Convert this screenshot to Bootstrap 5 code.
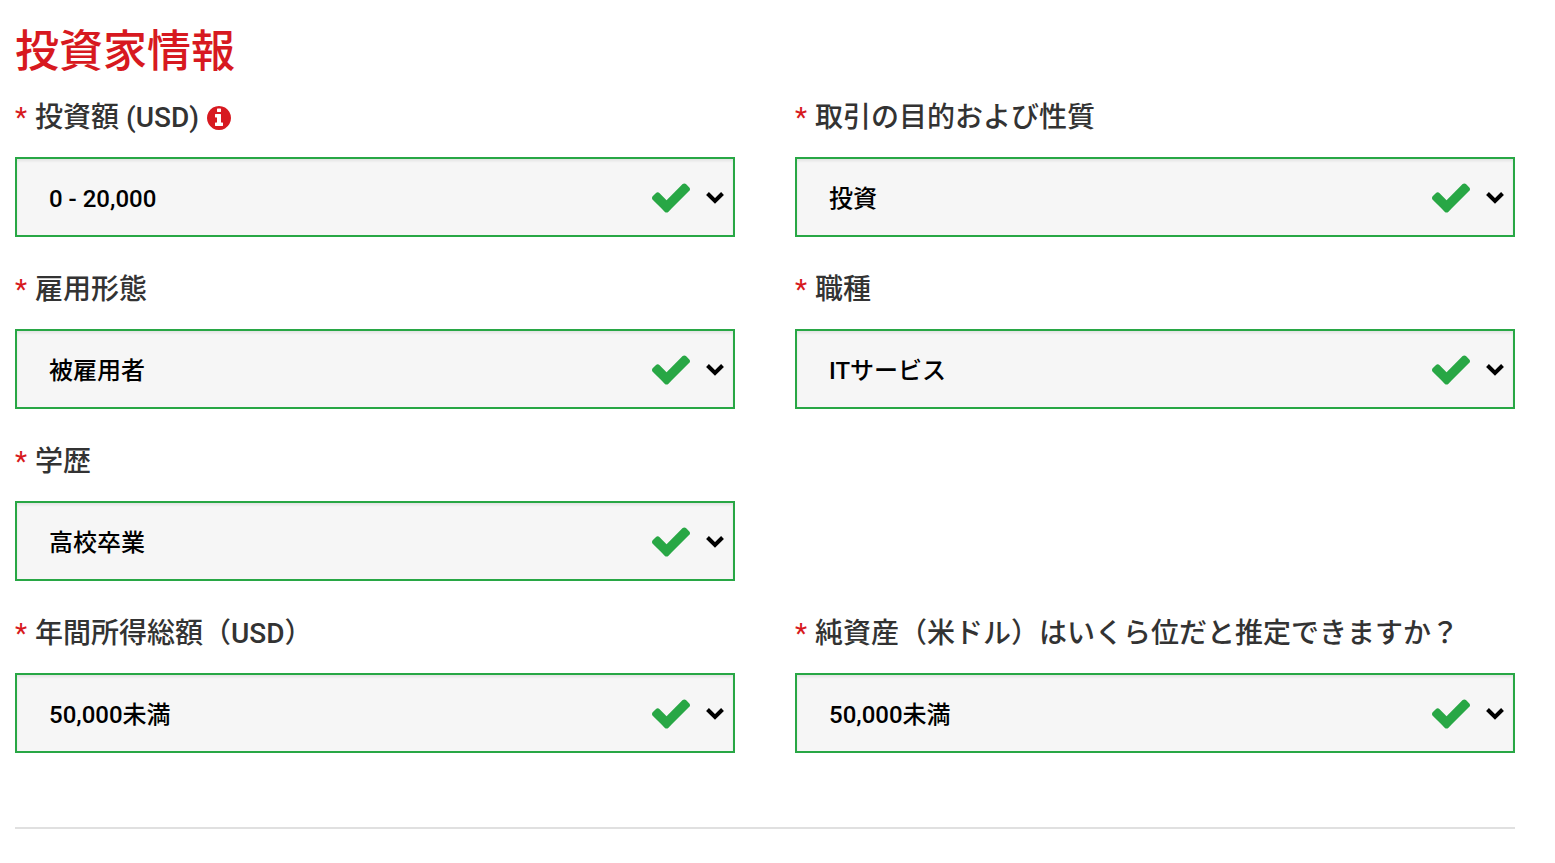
<!DOCTYPE html>
<html lang="ja">
<head>
<meta charset="utf-8">
<meta name="viewport" content="width=device-width, initial-scale=1">
<title>投資家情報</title>
<link rel="stylesheet" href="https://cdn.jsdelivr.net/npm/bootstrap@5.3.0/dist/css/bootstrap.min.css">
<style>
  body { font-family: Roboto, "Noto Sans CJK JP", sans-serif; font-weight: 500; color: #333; background: #fff; }
  .investor-form { padding: 25px 40px 32px 15px; }
  .form-title { font-size: 44px; line-height: 54px; font-weight: 500; color: #d71920; margin-bottom: 18px; }
  .field-row { --bs-gutter-x: 60px; --bs-gutter-y: 32px; }
  .field-label { font-size: 28px; line-height: 42px; margin-bottom: 18px; }
  .required-star { color: #d71920; font-weight: 400; margin-right: 1px; }
  .info-btn { color: #d71920; line-height: 0; }
  .field-select.form-select {
    height: 80px; padding: 4px 96px 0 32px; font-size: 24px; font-weight: 500; color: #000;
    background: #f6f6f6; border: 2px solid #28a745; border-radius: 0;
    box-shadow: inset 0 2px 3px rgba(0, 0, 0, .08);
  }
  .field-marks { right: 11px; padding-top: 2px; color: #28a745; pointer-events: none; gap: 16px; }
  .section-rule { margin: 74px 0 0; border-top: 2px solid #e0e0e0; opacity: 1; }
</style>
</head>
<body>
<svg class="d-none" aria-hidden="true">
  <symbol id="check" viewBox="121 334 1550 1188"><path fill="currentColor" d="M1671 566q0 40-28 68l-724 724-136 136q-28 28-68 28t-68-28l-136-136-362-362q-28-28-28-68t28-68l136-136q28-28 68-28t68 28l294 295 656-657q28-28 68-28t68 28l136 136q28 28 28 68z"/></symbol>
  <symbol id="chevron" viewBox="0 0 18 12"><path fill="none" stroke="#000" stroke-width="4" d="M1.5 1.5 9 9l7.500-7.500"/></symbol>
</svg>
<main class="container-fluid investor-form">
  <h1 class="form-title">投資家情報</h1>
  <form>
    <div class="row field-row">
      <div class="col-6">
        <div class="field-label d-flex align-items-center gap-2"><label for="amount"><span class="required-star">*</span> 投資額 (USD)</label>
          <button type="button" class="btn p-0 border-0 rounded-circle info-btn" aria-label="投資額の説明"><svg width="24" height="24" viewBox="128 128 1536 1536" aria-hidden="true"><path fill="currentColor" d="M1152 1376v-160q0-14-9-23t-23-9h-96v-512q0-14-9-23t-23-9h-320q-14 0-23 9t-9 23v160q0 14 9 23t23 9h96v320h-96q-14 0-23 9t-9 23v160q0 14 9 23t23 9h448q14 0 23-9t9-23zm-128-896v-160q0-14-9-23t-23-9h-192q-14 0-23 9t-9 23v160q0 14 9 23t23 9h192q14 0 23-9t9-23zm640 416q0 209-103 385.500t-279.500 279.500-385.500 103-385.500-103-279.500-279.500-103-385.500 103-385.500 279.500-279.500 385.500-103 385.500 103 279.500 279.500 103 385.500z"/></svg></button>
        </div>
        <div class="position-relative">
          <select id="amount" class="form-select field-select"><option>0 - 20,000</option></select>
          <span class="field-marks position-absolute top-50 translate-middle-y d-flex align-items-center"><svg width="38" height="30"><use href="#check"/></svg><svg width="18" height="12"><use href="#chevron"/></svg></span>
        </div>
      </div>
      <div class="col-6">
        <div class="field-label"><label for="purpose"><span class="required-star">*</span> 取引の目的および性質</label></div>
        <div class="position-relative">
          <select id="purpose" class="form-select field-select"><option>投資</option></select>
          <span class="field-marks position-absolute top-50 translate-middle-y d-flex align-items-center"><svg width="38" height="30"><use href="#check"/></svg><svg width="18" height="12"><use href="#chevron"/></svg></span>
        </div>
      </div>
      <div class="col-6">
        <div class="field-label"><label for="employment"><span class="required-star">*</span> 雇用形態</label></div>
        <div class="position-relative">
          <select id="employment" class="form-select field-select"><option>被雇用者</option></select>
          <span class="field-marks position-absolute top-50 translate-middle-y d-flex align-items-center"><svg width="38" height="30"><use href="#check"/></svg><svg width="18" height="12"><use href="#chevron"/></svg></span>
        </div>
      </div>
      <div class="col-6">
        <div class="field-label"><label for="occupation"><span class="required-star">*</span> 職種</label></div>
        <div class="position-relative">
          <select id="occupation" class="form-select field-select"><option>ITサービス</option></select>
          <span class="field-marks position-absolute top-50 translate-middle-y d-flex align-items-center"><svg width="38" height="30"><use href="#check"/></svg><svg width="18" height="12"><use href="#chevron"/></svg></span>
        </div>
      </div>
      <div class="col-6 me-auto">
        <div class="field-label"><label for="education"><span class="required-star">*</span> 学歴</label></div>
        <div class="position-relative">
          <select id="education" class="form-select field-select"><option>高校卒業</option></select>
          <span class="field-marks position-absolute top-50 translate-middle-y d-flex align-items-center"><svg width="38" height="30"><use href="#check"/></svg><svg width="18" height="12"><use href="#chevron"/></svg></span>
        </div>
      </div>
      <div class="w-100 m-0"></div>
      <div class="col-6">
        <div class="field-label"><label for="income"><span class="required-star">*</span> 年間所得総額（USD）</label></div>
        <div class="position-relative">
          <select id="income" class="form-select field-select"><option>50,000未満</option></select>
          <span class="field-marks position-absolute top-50 translate-middle-y d-flex align-items-center"><svg width="38" height="30"><use href="#check"/></svg><svg width="18" height="12"><use href="#chevron"/></svg></span>
        </div>
      </div>
      <div class="col-6">
        <div class="field-label"><label for="networth"><span class="required-star">*</span> 純資産（米ドル）はいくら位だと推定できますか？</label></div>
        <div class="position-relative">
          <select id="networth" class="form-select field-select"><option>50,000未満</option></select>
          <span class="field-marks position-absolute top-50 translate-middle-y d-flex align-items-center"><svg width="38" height="30"><use href="#check"/></svg><svg width="18" height="12"><use href="#chevron"/></svg></span>
        </div>
      </div>
    </div>
  </form>
  <hr class="section-rule">
</main>
<script src="https://cdn.jsdelivr.net/npm/bootstrap@5.3.0/dist/js/bootstrap.bundle.min.js"></script>
</body>
</html>
